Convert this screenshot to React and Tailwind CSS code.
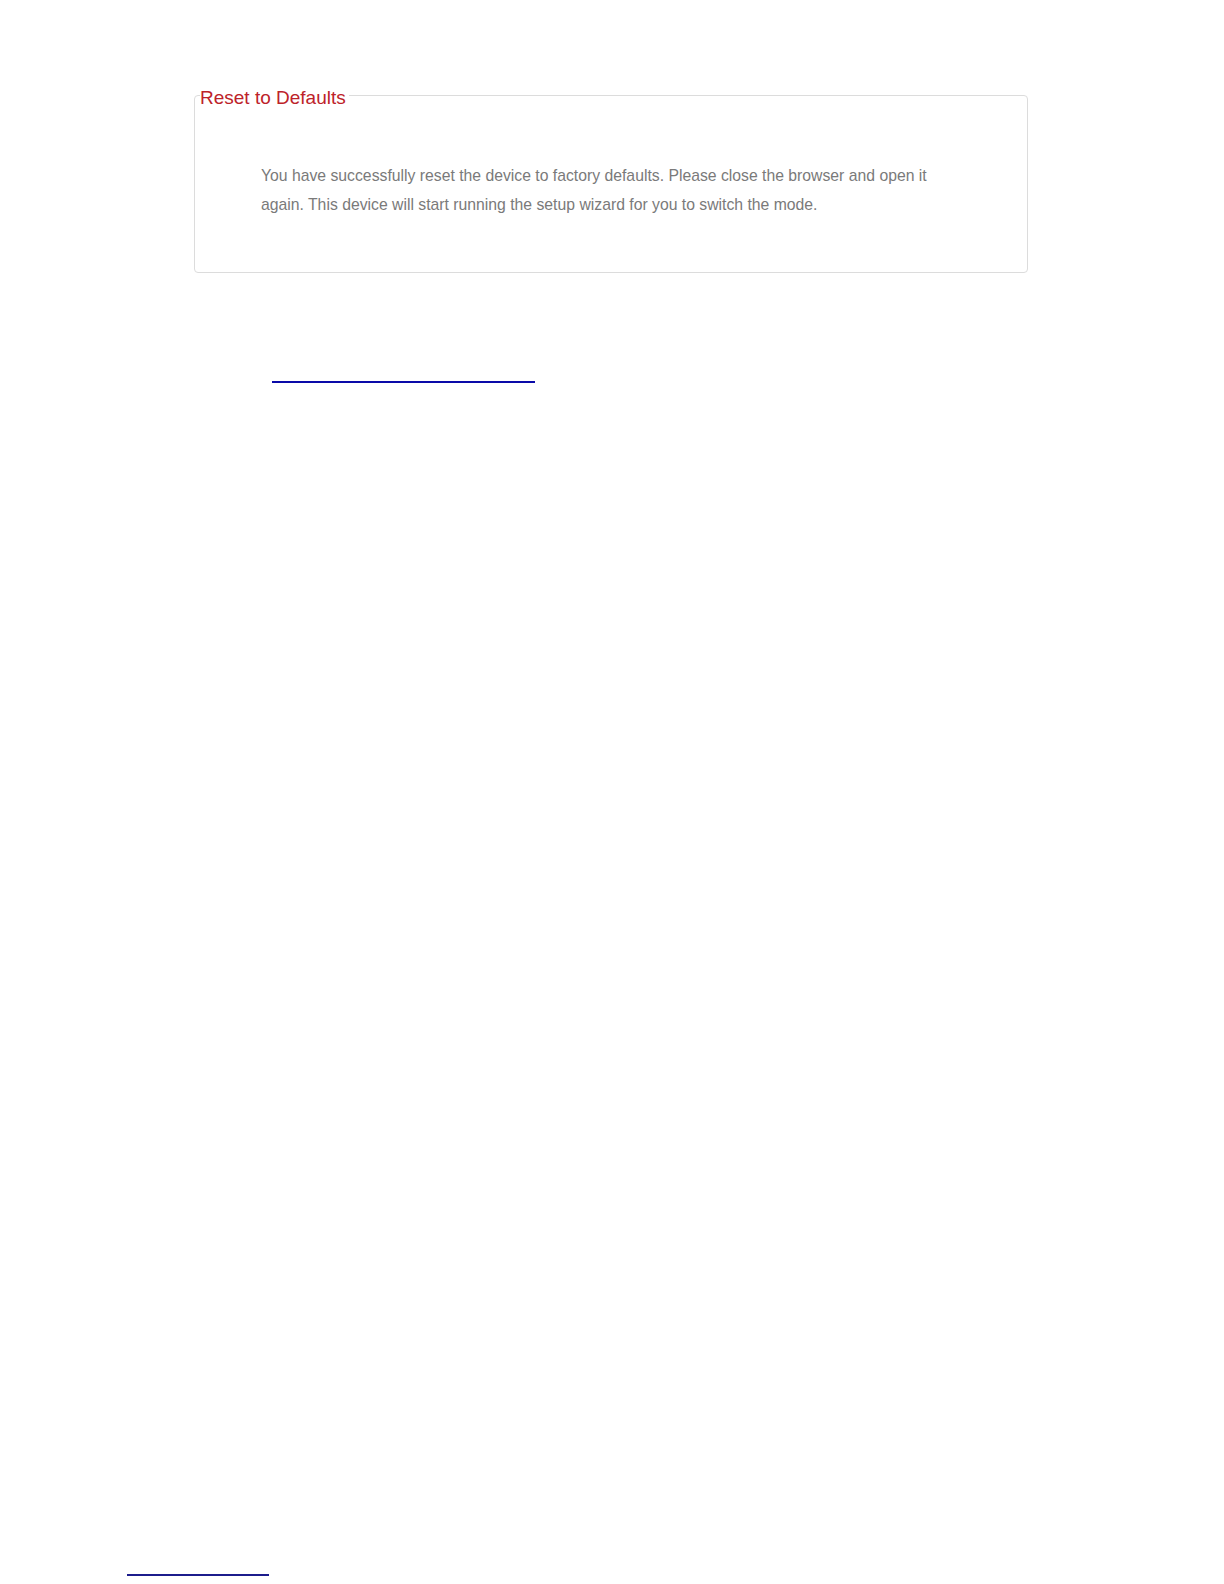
export default function App() {
  return (
    <div className="w-[1224px] h-[1584px] bg-white relative" style={{ fontFamily: '"Liberation Sans", Arial, sans-serif' }}>
      <div className="pt-[82px] pl-[194px]">
        <fieldset className="w-[834px] h-[191px] border border-[#dcdcdc] rounded-[4px] px-0 m-0">
          <legend className="ml-[5px] pl-[0px] pr-[3px] pt-[5px] text-[19px] leading-[22px] text-[#bd2229]">Reset to Defaults</legend>
          <p className="pl-[66px] pt-[52px] pr-[90px] text-[15.75px] leading-[29px] text-[#7a7a7a]">
            You have successfully reset the device to factory defaults. Please close the browser and open it again. This device will start running the setup wizard for you to switch the mode.
          </p>
        </fieldset>
      </div>
      <div className="absolute left-[272px] top-[381px] w-[263px] h-[2px] bg-[#0a0aa8]"></div>
      <div className="absolute left-[127px] top-[1574px] w-[142px] h-[2px] bg-[#1c1c8c]"></div>
    </div>
  );
}
